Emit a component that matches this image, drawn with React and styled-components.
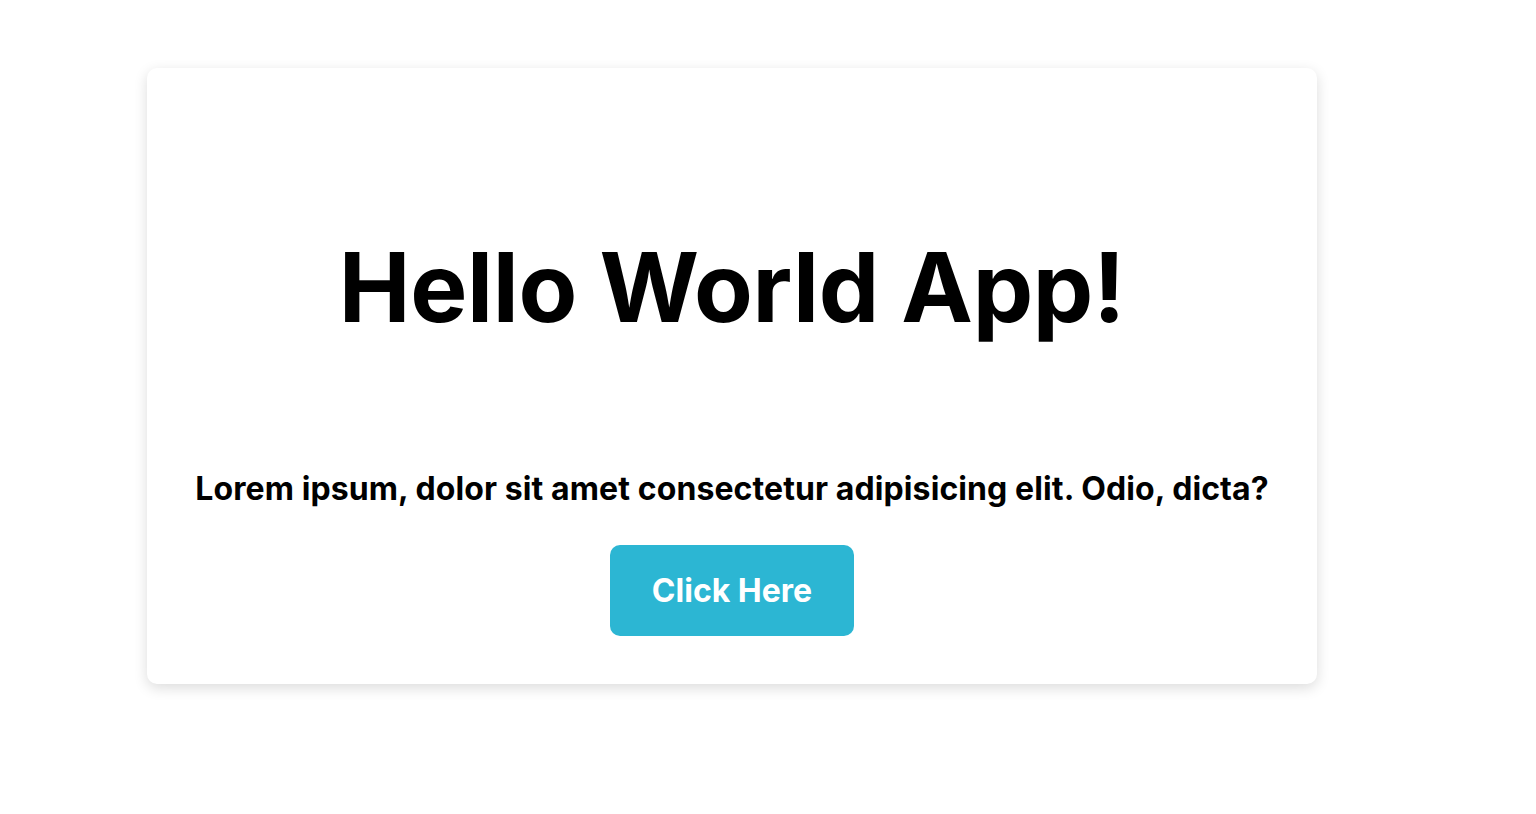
import React from "react"
import styled, { createGlobalStyle } from "styled-components"

const GlobalStyle = createGlobalStyle`
  * {
    box-sizing: border-box;
  }

  body {
    margin: 0;
    background: #ffffff;
    font-family: Inter, "Noto Sans", sans-serif;
    color: #000000;
  }
`

const Page = styled.main`
  padding: 68px 0 0 147px;
  min-height: 814px;
`

const Card = styled.section`
  width: 1170px;
  background: #ffffff;
  border-radius: 10px;
  box-shadow: 0 4px 14px rgba(0, 0, 0, 0.14);
  padding: 162px 0 48px;
  display: flex;
  flex-direction: column;
  align-items: center;
  text-align: center;
`

const Title = styled.h1`
  margin: 0 0 125px;
  font-size: 96px;
  line-height: 1.2;
  font-weight: 700;
  letter-spacing: -0.3px;
`

const Lead = styled.p`
  margin: 0 0 36px;
  font-size: 32px;
  line-height: 1.2;
  font-weight: 700;
  letter-spacing: 0.1px;
`

const Button = styled.button`
  width: 244px;
  height: 91px;
  padding: 3px 0 0;
  border: none;
  border-radius: 10px;
  background: #2cb6d3;
  color: #ffffff;
  font-family: Inter, "Noto Sans", sans-serif;
  font-size: 32px;
  line-height: 1.2;
  font-weight: 700;
  display: flex;
  align-items: center;
  justify-content: center;
  cursor: pointer;
`

const App = () => (
  <>
    <GlobalStyle />
    <Page>
      <Card>
        <Title>Hello World App!</Title>
        <Lead>Lorem ipsum, dolor sit amet consectetur adipisicing elit. Odio, dicta?</Lead>
        <Button>Click Here</Button>
      </Card>
    </Page>
  </>
)

export default App
